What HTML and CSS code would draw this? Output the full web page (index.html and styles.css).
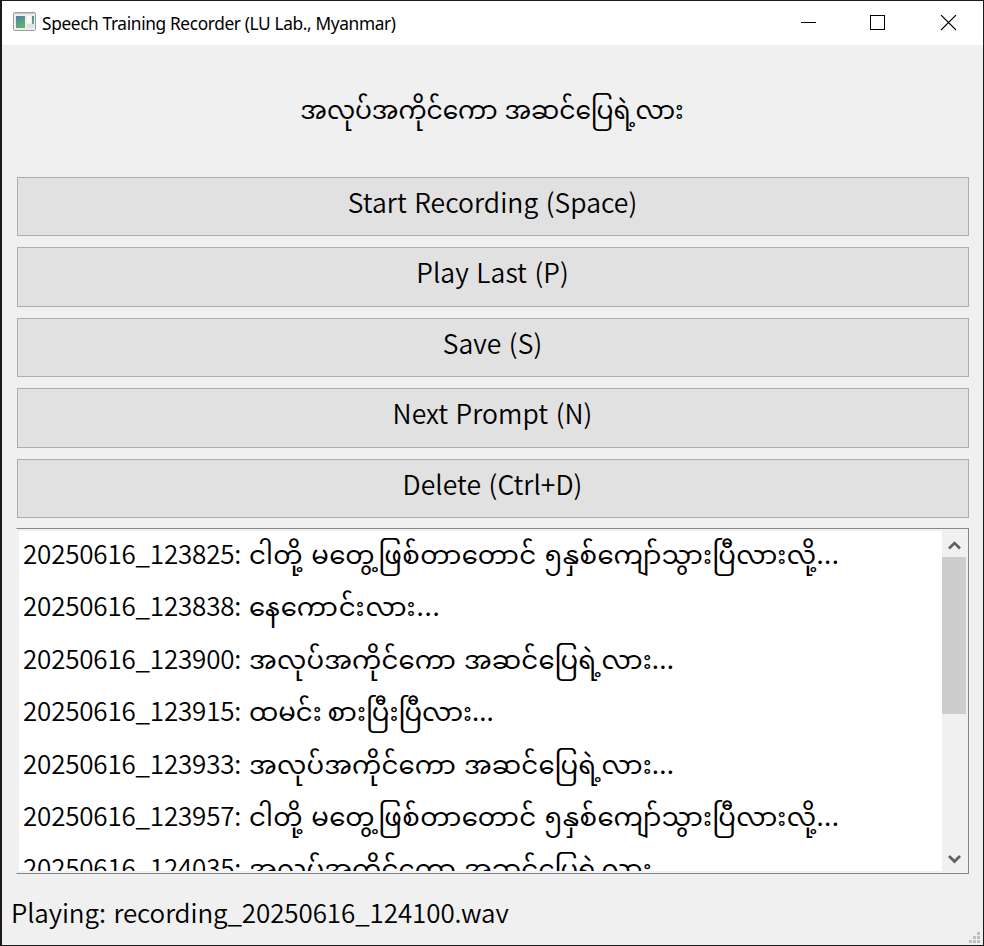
FILE: index.html
```html
<!DOCTYPE html>
<html lang="my">
<head>
<meta charset="utf-8">
<title>Speech Training Recorder (LU Lab., Myanmar)</title>
<link rel="stylesheet" href="styles.css">
</head>
<body>
<div class="window">
  <header class="titlebar">
    <svg class="app-icon" width="23" height="19" viewBox="0 0 23 19">
      <defs><linearGradient id="g" x1="0" y1="0" x2="0.4" y2="1"><stop offset="0" stop-color="#4d7fa8"/><stop offset="1" stop-color="#5cb270"/></linearGradient></defs>
      <rect x=".5" y=".5" width="22" height="18" rx="1" fill="#eceded" stroke="#9a9fa5"/>
      <path d="M1 1.500h21" stroke="#c3c8ce"/>
      <rect x="3" y="4" width="9" height="12" fill="url(#g)"/>
      <rect x="14" y="4" width="4" height="7" fill="#fafafa"/>
      <rect x="19" y="4" width="2" height="8" fill="url(#g)"/>
      <rect x="14" y="12" width="7" height="4" fill="#e0e0e0"/>
    </svg>
    <h1 class="title">Speech Training Recorder (LU Lab., Myanmar)</h1>
    <svg class="controls" width="156" height="16" viewBox="0 0 156 16" fill="none" stroke="#000">
      <path d="M0 7.500h15"/>
      <rect x="69.500" y=".5" width="14" height="14"/>
      <path d="M140 0l15 15M155 0l-15 15" stroke-width="1.100"/>
    </svg>
  </header>
  <main class="content">
    <p class="prompt">အလုပ်အကိုင်ကော အဆင်ပြေရဲ့လား</p>
    <div class="buttons">
      <button class="button">Start Recording (Space)</button>
      <button class="button">Play Last (P)</button>
      <button class="button">Save (S)</button>
      <button class="button">Next Prompt (N)</button>
      <button class="button">Delete (Ctrl+D)</button>
    </div>
    <section class="list">
      <ul class="items">
        <li><span class="stamp">20250616_123825:</span><span class="text long">ငါတို့ မတွေ့ဖြစ်တာတောင် ၅နှစ်ကျော်သွားပြီလားလို့...</span></li>
        <li><span class="stamp">20250616_123838:</span><span class="text short">နေကောင်းလား...</span></li>
        <li><span class="stamp">20250616_123900:</span><span class="text medium">အလုပ်အကိုင်ကော အဆင်ပြေရဲ့လား...</span></li>
        <li><span class="stamp">20250616_123915:</span><span class="text">ထမင်း စားပြီးပြီလား...</span></li>
        <li><span class="stamp">20250616_123933:</span><span class="text medium">အလုပ်အကိုင်ကော အဆင်ပြေရဲ့လား...</span></li>
        <li><span class="stamp">20250616_123957:</span><span class="text long">ငါတို့ မတွေ့ဖြစ်တာတောင် ၅နှစ်ကျော်သွားပြီလားလို့...</span></li>
        <li><span class="stamp">20250616_124035:</span><span class="text medium">အလုပ်အကိုင်ကော အဆင်ပြေရဲ့လား...</span></li>
      </ul>
      <div class="scrollbar">
        <svg class="arrow" width="24" height="26" viewBox="0 0 24 26"><path d="M7 17.500l5.500-5.500L18 17.500" fill="none" stroke="#606060" stroke-width="2.600"/></svg>
        <div class="thumb"></div>
        <svg class="arrow down" width="24" height="26" viewBox="0 0 24 26"><path d="M7 11l5.500 5.500L18 11" fill="none" stroke="#606060" stroke-width="2.800"/></svg>
      </div>
    </section>
  </main>
  <footer class="status">
    <span class="message">Playing: recording_20250616_124100.wav</span>
    <svg class="grip" width="11" height="11" viewBox="0 0 11 11" fill="#bfbfbf"><path d="M8 0h3v3h-3zM4 4h3v3h-3zM8 4h3v3h-3zM0 8h3v3h-3zM4 8h3v3h-3zM8 8h3v3h-3z"/></svg>
  </footer>
</div>
</body>
</html>
```
FILE: styles.css
```css
* { box-sizing: border-box; }
body { margin: 0; background: #f0f0f0; color: #000; font-family: "Noto Sans CJK JP", "Noto Sans Myanmar", "Noto Sans", sans-serif; font-size: 26px; }
.window { width: 984px; height: 946px; display: flex; flex-direction: column; border: solid #1b191c; border-width: 1px 1px 1px 2px; background: #f0f0f0; overflow: hidden; }
.titlebar { height: 44px; flex: none; background: #fff; display: flex; align-items: flex-start; padding-left: 11px; }
.app-icon { margin-top: 11px; flex: none; }
.title { margin: 0 0 0 6px; font: 400 17.300px/46px "Noto Sans", sans-serif; letter-spacing: -.36px; white-space: nowrap; }
.controls { margin: 14px 26px 0 auto; flex: none; }
.content { padding: 0 14px 0 14px; display: flex; flex-direction: column; }
.prompt { margin: 0; height: 132px; padding-right: 1px; font-size: 25px; line-height: 126px; letter-spacing: -.08px; word-spacing: 1.500px; text-align: center; white-space: nowrap; }
.buttons { display: grid; grid-template-rows: 59px 60px 59px 60px 59px; row-gap: 11px; padding-left: 1px; }
.button { font: inherit; font-size: 26.500px; font-weight: 350; letter-spacing: .05px; word-spacing: 1.500px; color: #000; background: #e1e1e1; border: 1px solid #adadad; border-radius: 0; padding: 0 1px 10px 0; line-height: 46px; }
.list { margin: 10px 0 0; height: 346px; display: flex; border: 1px solid #828790; border-left-color: #f0f0f0; padding: 2px; background: #f0f0f0; }
.items { margin: 0; padding: 0 0 0 4px; flex: 1; min-width: 0; list-style: none; background: #fff; overflow: hidden; }
.items li { height: 52.400px; line-height: 44px; white-space: nowrap; display: flex; }
.stamp { width: 226px; flex: none; font-weight: 350; letter-spacing: -.2px; }
.long { letter-spacing: .42px; word-spacing: 2px; }
.medium { letter-spacing: .18px; word-spacing: 2px; }
.short { letter-spacing: .85px; }
.scrollbar { width: 24px; display: flex; flex-direction: column; }
.arrow { flex: none; display: block; }
.thumb { height: 157px; background: #cdcdcd; }
.down { margin-top: auto; }
.status { flex: 1; display: flex; align-items: center; padding: 4px 0 0 9px; position: relative; }
.message { line-height: 40px; font-weight: 350; letter-spacing: -.1px; word-spacing: 2px; white-space: nowrap; }
.grip { position: absolute; right: 3px; bottom: 2px; }
```
